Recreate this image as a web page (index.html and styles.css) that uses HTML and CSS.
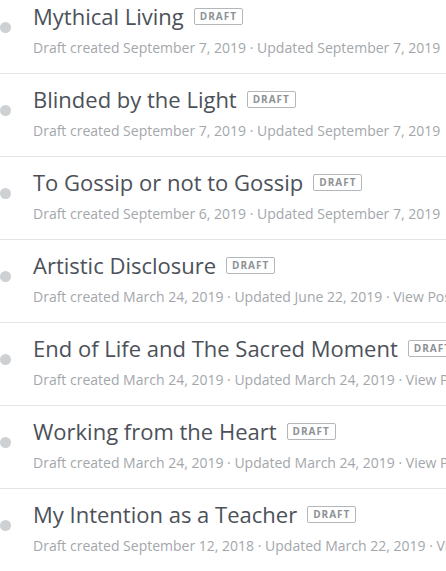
FILE: index.html
```html
<!DOCTYPE html>
<html lang="en">
<head>
  <meta charset="UTF-8" />
  <meta name="viewport" content="width=device-width, initial-scale=1.0"/>
  <title>Drafts</title>
  <link rel="stylesheet" href="styles.css">
</head>
<body>

  <ul class="post-list">
    <li class="post">
      <span class="dot"></span>
      <div class="post-info">
        <div class="post-head">
          <span class="post-title">Mythical Living</span>
          <span class="badge">DRAFT</span>
        </div>
        <div class="post-meta">Draft created September 7, 2019 · Updated September 7, 2019</div>
      </div>
    </li>
    <li class="post">
      <span class="dot"></span>
      <div class="post-info">
        <div class="post-head">
          <span class="post-title">Blinded by the Light</span>
          <span class="badge">DRAFT</span>
        </div>
        <div class="post-meta">Draft created September 7, 2019 · Updated September 7, 2019</div>
      </div>
    </li>
    <li class="post">
      <span class="dot"></span>
      <div class="post-info">
        <div class="post-head">
          <span class="post-title">To Gossip or not to Gossip</span>
          <span class="badge">DRAFT</span>
        </div>
        <div class="post-meta">Draft created September 6, 2019 · Updated September 7, 2019</div>
      </div>
    </li>
    <li class="post">
      <span class="dot"></span>
      <div class="post-info">
        <div class="post-head">
          <span class="post-title">Artistic Disclosure</span>
          <span class="badge">DRAFT</span>
        </div>
        <div class="post-meta">Draft created March 24, 2019 · Updated June 22, 2019 · View Post</div>
      </div>
    </li>
    <li class="post">
      <span class="dot"></span>
      <div class="post-info">
        <div class="post-head">
          <span class="post-title">End of Life and The Sacred Moment</span>
          <span class="badge">DRAFT</span>
        </div>
        <div class="post-meta">Draft created March 24, 2019 · Updated March 24, 2019 · View Post</div>
      </div>
    </li>
    <li class="post">
      <span class="dot"></span>
      <div class="post-info">
        <div class="post-head">
          <span class="post-title">Working from the Heart</span>
          <span class="badge">DRAFT</span>
        </div>
        <div class="post-meta">Draft created March 24, 2019 · Updated March 24, 2019 · View Post</div>
      </div>
    </li>
    <li class="post">
      <span class="dot"></span>
      <div class="post-info">
        <div class="post-head">
          <span class="post-title">My Intention as a Teacher</span>
          <span class="badge">DRAFT</span>
        </div>
        <div class="post-meta">Draft created September 12, 2018 · Updated March 22, 2019 · View Post</div>
      </div>
    </li>
  </ul>

</body>
</html>
```

FILE: styles.css
```css
body {
  margin: 0;
  background: #fff;
  font-family: 'Open Sans', sans-serif;
  overflow: hidden;
}

.post-list {
  list-style: none;
  margin: -9px 0 0;
  padding: 0;
}

.post {
  display: flex;
  align-items: flex-start;
  gap: 22px;
  height: 82px;
  border-bottom: 1px solid #e4e4e4;
  white-space: nowrap;
}

.dot {
  flex: none;
  width: 11px;
  height: 11px;
  border-radius: 50%;
  background: #cdd1d4;
  margin-top: 31px;
}

.post-info {
  min-width: 0;
  padding-top: 11px;
}

.post-head {
  display: flex;
  align-items: center;
  gap: 10px;
}

.post-title {
  font-size: 22px;
  line-height: 28px;
  color: #4c5159;
}

.badge {
  font-size: 10px;
  font-weight: 700;
  letter-spacing: 1px;
  color: #8e9296;
  border: 1px solid #b4b7ba;
  border-radius: 2px;
  padding: 1px 5px;
  line-height: 13px;
}

.post-meta {
  margin-top: 9px;
  font-size: 14px;
  line-height: 18px;
  color: #a3a7ab;
}
```
